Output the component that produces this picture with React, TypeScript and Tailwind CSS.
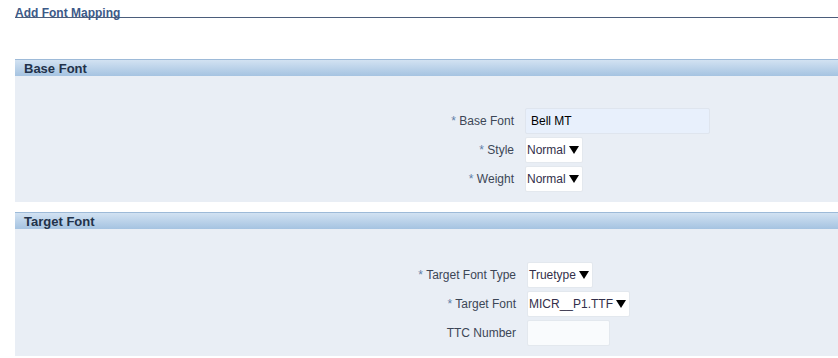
import React from "react"

const fontStack = "font-['Liberation_Sans','Tahoma',sans-serif]"

function Caret() {
  return (
    <svg width="10" height="8" viewBox="0 0 10 8" className="ml-[3px] shrink-0">
      <path d="M0 0 H10 L5 8 Z" fill="#000" />
    </svg>
  )
}

function Label({ text, required = true }: { text: string; required?: boolean }) {
  return (
    <div className="text-right text-[12px] text-[#3c4656] leading-none pr-[11px]">
      {required && <span className="text-[#5f7fa8]">* </span>}
      {text}
    </div>
  )
}

function SelectBox({ value }: { value: string }) {
  return (
    <div className="w-fit h-[26px] bg-white border border-[#e3e8ee] rounded-[2px] flex items-center pl-[1px] pr-[3px] text-[12px] text-[#332f4a]">
      <span>{value}</span>
      <Caret />
    </div>
  )
}

function SectionHeader({ title }: { title: string }) {
  return (
    <div className="h-[17px] border-t border-[#9dbad8] bg-gradient-to-b from-[#d2e2f2] to-[#a5c3e1] pl-[9px] flex items-center">
      <span className="text-[13px] font-bold text-[#22324a] leading-none">{title}</span>
    </div>
  )
}

export default function App() {
  return (
    <div className={`${fontStack} bg-white w-[838px] h-[358px] pl-[15px] overflow-hidden`}>
      {/* Page title */}
      <div className="h-[18px] border-b border-[#4b5d7b] pt-[4px] leading-none">
        <span className="text-[12px] font-bold text-[#3d5a88] leading-none">Add Font Mapping</span>
      </div>

      {/* Base Font */}
      <div className="mt-[41px]">
        <SectionHeader title="Base Font" />
        <div className="h-[126px] bg-[#e9eef5] pt-[32px]">
          <div className="grid grid-cols-[510px_auto] gap-y-[3px] items-center">
            <Label text="Base Font" />
            <div className="w-[185px] h-[26px] bg-[#e8f0fc] border border-[#dfe5ee] rounded-[2px] flex items-center pl-[5px] text-[12px] text-black">
              Bell MT
            </div>
            <Label text="Style" />
            <SelectBox value="Normal" />
            <Label text="Weight" />
            <SelectBox value="Normal" />
          </div>
        </div>
      </div>

      {/* Target Font */}
      <div className="mt-[10px]">
        <SectionHeader title="Target Font" />
        <div className="h-[127px] bg-[#e9eef5] pt-[33px]">
          <div className="grid grid-cols-[512px_auto] gap-y-[3px] items-center">
            <Label text="Target Font Type" />
            <SelectBox value="Truetype" />
            <Label text="Target Font" />
            <SelectBox value="MICR__P1.TTF" />
            <Label text="TTC Number" required={false} />
            <div className="w-[83px] h-[26px] bg-[#f9fbfd] border border-[#e3e8ee] rounded-[2px]" />
          </div>
        </div>
      </div>
    </div>
  )
}
